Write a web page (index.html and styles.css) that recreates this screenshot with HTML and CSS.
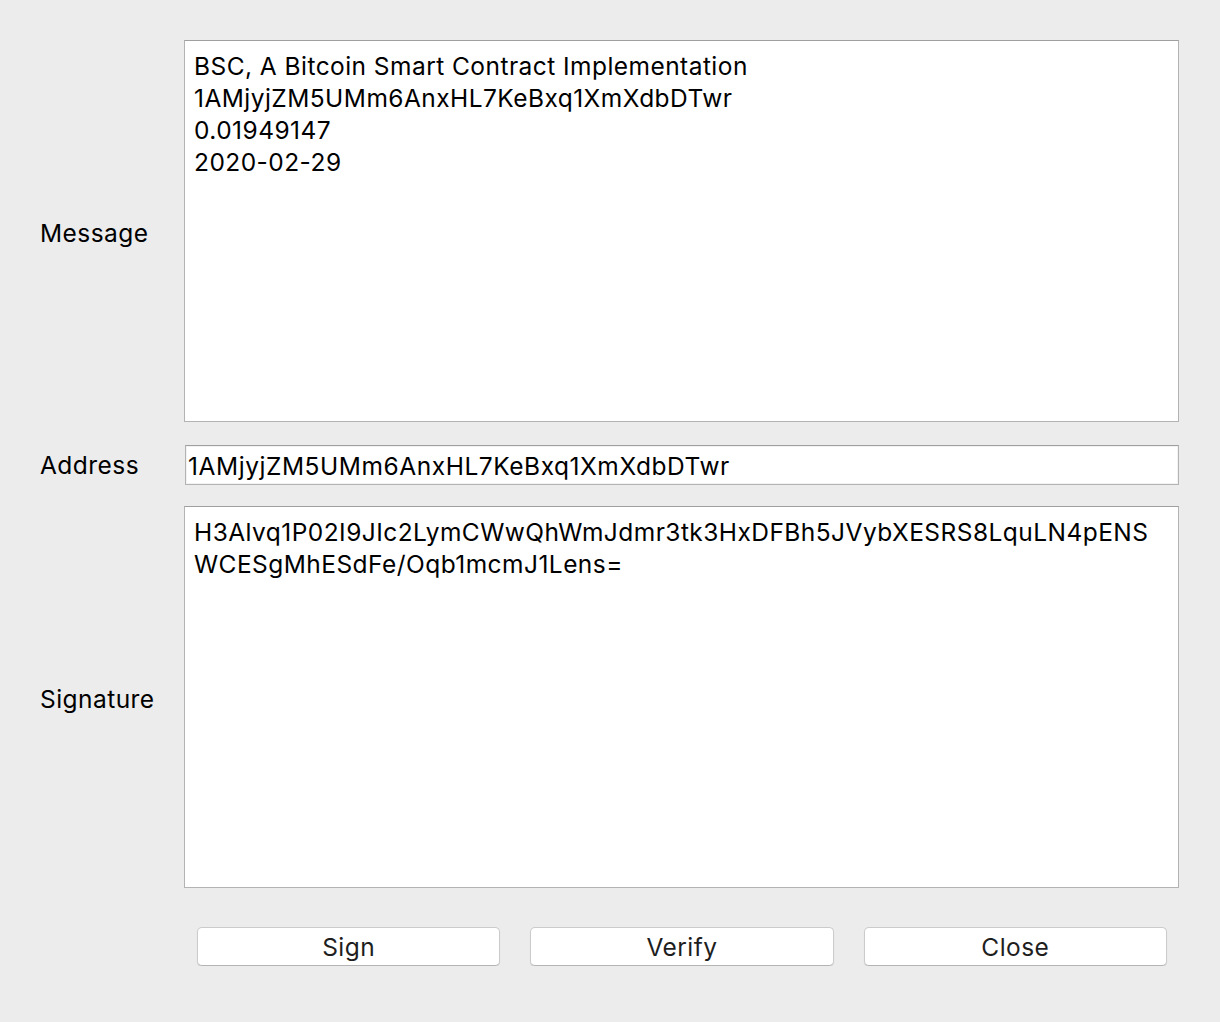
FILE: index.html
```html
<!DOCTYPE html>
<html>
<head>
<meta charset="utf-8">
<link rel="stylesheet" href="styles.css">
</head>
<body>
<div class="dialog">
  <div class="row row-message">
    <div class="label label-tall">Message</div>
    <div class="box area">BSC, A Bitcoin Smart Contract Implementation
1AMjyjZM5UMm6AnxHL7KeBxq1XmXdbDTwr
0.01949147
2020-02-29</div>
  </div>
  <div class="row row-address">
    <div class="label">Address</div>
    <div class="box field">1AMjyjZM5UMm6AnxHL7KeBxq1XmXdbDTwr</div>
  </div>
  <div class="row row-signature">
    <div class="label label-tall">Signature</div>
    <div class="box area">H3Alvq1P02I9JIc2LymCWwQhWmJdmr3tk3HxDFBh5JVybXESRS8LquLN4pENS
WCESgMhESdFe/Oqb1mcmJ1Lens=</div>
  </div>
  <div class="buttons">
    <div class="btn">Sign</div>
    <div class="btn">Verify</div>
    <div class="btn">Close</div>
  </div>
</div>
</body>
</html>
```
FILE: styles.css
```css
html, body {
  margin: 0;
  padding: 0;
  background: #ececec;
}
body {
  font-family: Inter, "Liberation Sans", sans-serif;
  font-size: 24.5px;
  letter-spacing: 0.45px;
  color: #000;
}
.dialog {
  padding: 40px 41px 0 40px;
}
.row {
  display: flex;
}
.row-message {
  height: 382px;
  margin-bottom: 23px;
}
.row-address {
  height: 40px;
  margin-bottom: 21px;
}
.row-signature {
  height: 382px;
}
.label {
  width: 144px;
  flex: none;
  display: flex;
  align-items: center;
  white-space: nowrap;
}
.label-tall {
  padding-top: 4px;
  box-sizing: border-box;
}
.box {
  flex: 1;
  background: #fff;
  border: 1px solid #b3b3b3;
  border-top-color: #9f9f9f;
  box-sizing: border-box;
}
.area {
  white-space: pre;
  line-height: 32px;
  padding: 9px 9px;
  overflow: hidden;
}
.field {
  display: flex;
  align-items: center;
  padding: 1px 2px 0;
  margin-left: 1px;
  white-space: nowrap;
  letter-spacing: 0.55px;
  box-shadow: inset 0 0 0 1px #f2f2f2;
}
.buttons {
  display: flex;
  gap: 30px;
  margin: 39px 12px 0 157px;
}
.btn {
  flex: 1;
  height: 39px;
  box-sizing: border-box;
  background: #fff;
  border: 1px solid #cbcbcb;
  border-bottom-color: #b4b4b4;
  border-radius: 5px;
  box-shadow: 0 1px 1px rgba(0,0,0,0.10);
  color: #1e1e1e;
  display: flex;
  align-items: center;
  justify-content: center;
}
```
